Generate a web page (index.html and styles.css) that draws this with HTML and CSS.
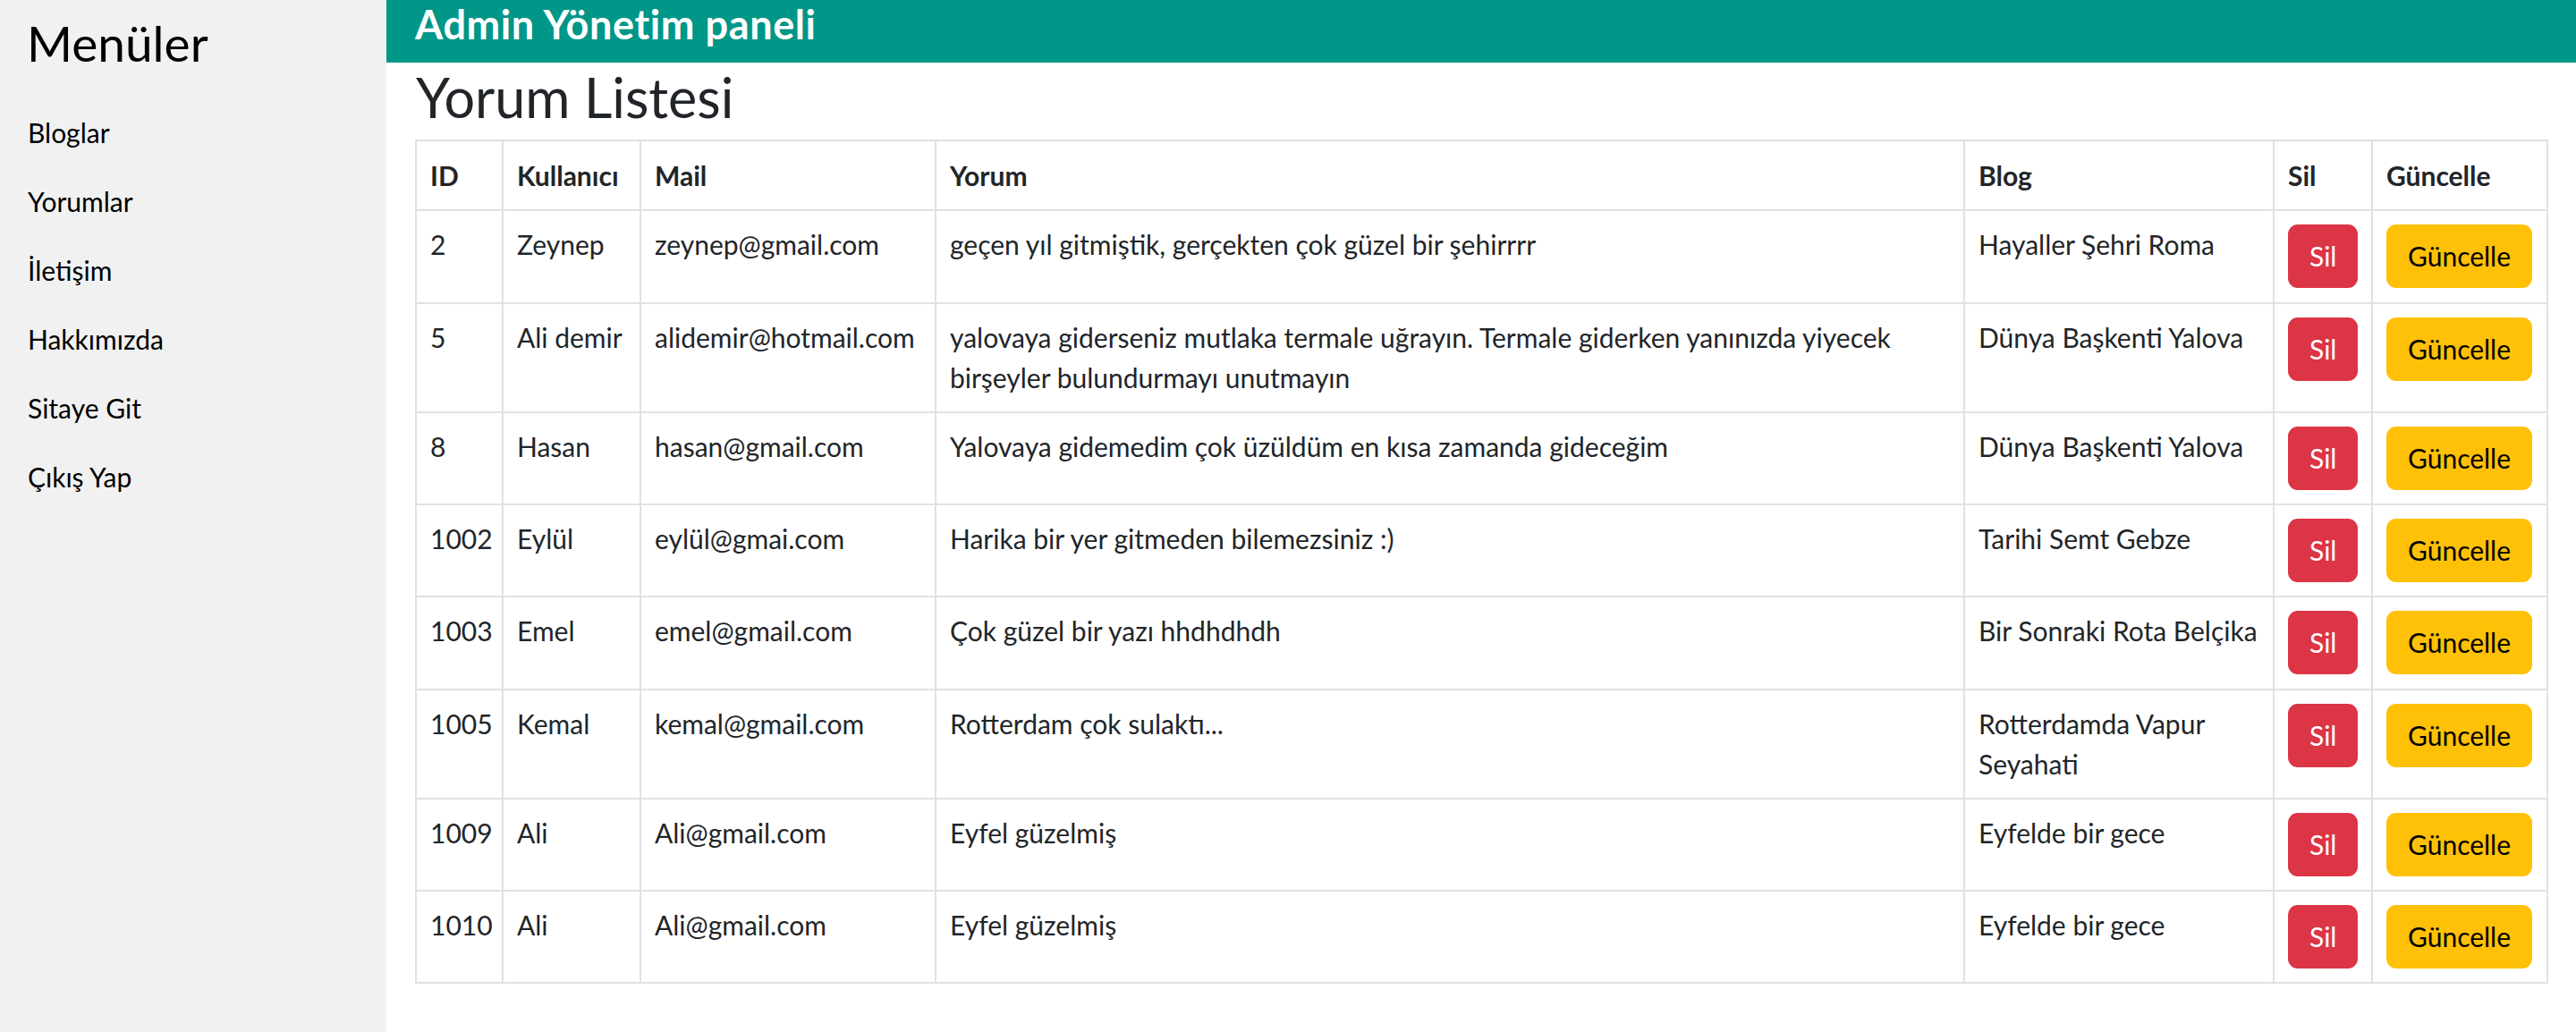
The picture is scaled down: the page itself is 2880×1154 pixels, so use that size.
FILE: index.html
```html
<!DOCTYPE html>
<html lang="tr">
<head>
<meta charset="utf-8">
<title>Admin Yönetim paneli</title>
<link rel="stylesheet" href="styles.css">
</head>
<body>
<div class="layout">
  <aside class="sidebar">
    <h2 class="side-title">Menüler</h2>
    <nav class="side-nav">
      <a class="side-item" href="#">Bloglar</a>
      <a class="side-item" href="#">Yorumlar</a>
      <a class="side-item" href="#">İletişim</a>
      <a class="side-item" href="#">Hakkımızda</a>
      <a class="side-item" href="#">Sitaye Git</a>
      <a class="side-item" href="#">Çıkış Yap</a>
    </nav>
  </aside>
  <main class="main">
    <header class="topbar"><h4 class="topbar-title">Admin Yönetim paneli</h4></header>
    <section class="content">
      <h1 class="page-title">Yorum Listesi</h1>
      <table class="grid">
        <colgroup>
          <col class="c-id"><col class="c-user"><col class="c-mail"><col class="c-text"><col class="c-blog"><col class="c-del"><col class="c-upd">
        </colgroup>
        <thead>
          <tr><th>ID</th><th>Kullanıcı</th><th>Mail</th><th>Yorum</th><th>Blog</th><th>Sil</th><th>Güncelle</th></tr>
        </thead>
        <tbody>
          <tr><td>2</td><td>Zeynep</td><td class="nowrap">zeynep@gmail.com</td><td>geçen yıl gitmiştik, gerçekten çok güzel bir şehirrrr</td><td>Hayaller Şehri Roma</td><td><a class="btn btn-del" href="#">Sil</a></td><td><a class="btn btn-upd" href="#">Güncelle</a></td></tr>
          <tr><td>5</td><td>Ali demir</td><td class="nowrap">alidemir@hotmail.com</td><td>yalovaya giderseniz mutlaka termale uğrayın. Termale giderken yanınızda yiyecek birşeyler bulundurmayı unutmayın</td><td>Dünya Başkenti Yalova</td><td><a class="btn btn-del" href="#">Sil</a></td><td><a class="btn btn-upd" href="#">Güncelle</a></td></tr>
          <tr><td>8</td><td>Hasan</td><td class="nowrap">hasan@gmail.com</td><td>Yalovaya gidemedim çok üzüldüm en kısa zamanda gideceğim</td><td>Dünya Başkenti Yalova</td><td><a class="btn btn-del" href="#">Sil</a></td><td><a class="btn btn-upd" href="#">Güncelle</a></td></tr>
          <tr><td>1002</td><td>Eylül</td><td class="nowrap">eylül@gmai.com</td><td>Harika bir yer gitmeden bilemezsiniz :)</td><td>Tarihi Semt Gebze</td><td><a class="btn btn-del" href="#">Sil</a></td><td><a class="btn btn-upd" href="#">Güncelle</a></td></tr>
          <tr><td>1003</td><td>Emel</td><td class="nowrap">emel@gmail.com</td><td>Çok güzel bir yazı hhdhdhdh</td><td class="nowrap">Bir Sonraki Rota Belçika</td><td><a class="btn btn-del" href="#">Sil</a></td><td><a class="btn btn-upd" href="#">Güncelle</a></td></tr>
          <tr><td>1005</td><td>Kemal</td><td class="nowrap">kemal@gmail.com</td><td>Rotterdam çok sulaktı...</td><td>Rotterdamda Vapur Seyahati</td><td><a class="btn btn-del" href="#">Sil</a></td><td><a class="btn btn-upd" href="#">Güncelle</a></td></tr>
          <tr><td>1009</td><td>Ali</td><td class="nowrap">Ali@gmail.com</td><td>Eyfel güzelmiş</td><td>Eyfelde bir gece</td><td><a class="btn btn-del" href="#">Sil</a></td><td><a class="btn btn-upd" href="#">Güncelle</a></td></tr>
          <tr><td>1010</td><td>Ali</td><td class="nowrap">Ali@gmail.com</td><td>Eyfel güzelmiş</td><td>Eyfelde bir gece</td><td><a class="btn btn-del" href="#">Sil</a></td><td><a class="btn btn-upd" href="#">Güncelle</a></td></tr>
        </tbody>
      </table>
    </section>
  </main>
</div>
</body>
</html>
```
FILE: styles.css
```css
html, body {
  margin: 0;
  padding: 0;
  background: #ffffff;
}
body {
  font-family: "Lato", "Liberation Sans", sans-serif;
  font-size: 30px;
  line-height: 45px;
  color: #212529;
}
.layout {
  display: flex;
  min-height: 1154px;
}
.sidebar {
  width: 432px;
  flex: 0 0 432px;
  background: #f1f1f1;
  color: #000;
}
.side-title {
  margin: 15px 0 29px 0;
  padding-left: 30px;
  font-size: 55px;
  line-height: 66px;
  font-weight: 400;
  color: #000;
}
.side-nav {
  display: flex;
  flex-direction: column;
}
.side-item {
  display: block;
  padding: 16px 31px;
  line-height: 45px;
  font-size: 30px;
  color: #000;
  text-decoration: none;
}
.main {
  flex: 1 1 auto;
  min-width: 0;
}
.topbar {
  background: #009688;
  height: 70px;
  box-sizing: border-box;
  padding: 0 0 0 32px;
}
.topbar-title {
  margin: 0;
  font-size: 45px;
  line-height: 54px;
  letter-spacing: 0.6px;
  font-weight: 700;
  color: #fff;
}
.content {
  padding: 0 33px 0 32px;
}
.page-title {
  margin: 2px 0 11px 1px;
  font-size: 61px;
  line-height: 73px;
  font-weight: 400;
  color: #212529;
}
.grid {
  width: 2383px;
  table-layout: fixed;
  border-collapse: collapse;
  border: 2px solid #dee2e6;
}
.c-id { width: 97px; }
.c-user { width: 154px; }
.c-mail { width: 330px; }
.c-text { width: 1150px; }
.c-blog { width: 346px; }
.c-del { width: 110px; }
.c-upd { width: 196px; }
.grid th,
.grid td {
  border: 2px solid #dee2e6;
  padding: 15px 15px 15.25px;
  text-align: left;
  vertical-align: top;
  font-size: 30px;
  line-height: 45px;
}
.grid th {
  padding-top: 16px;
  font-weight: 700;
  vertical-align: bottom;
}
.nowrap {
  white-space: nowrap;
}
.btn {
  display: inline-block;
  vertical-align: top;
  padding: 11px 22px;
  border: 2px solid transparent;
  border-radius: 11px;
  font-size: 30px;
  line-height: 45px;
  text-decoration: none;
  white-space: nowrap;
}
.btn-del {
  background: #dc3545;
  border-color: #dc3545;
  color: #fff;
}
.btn-upd {
  background: #ffc107;
  border-color: #ffc107;
  color: #000;
}
```
